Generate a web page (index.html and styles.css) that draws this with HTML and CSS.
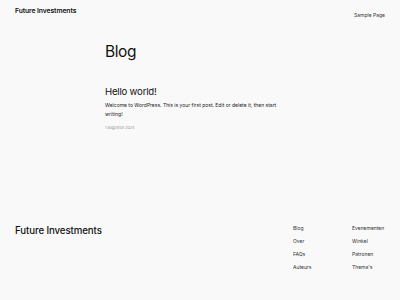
FILE: index.html
```html
<!DOCTYPE html>
<html lang="nl">
<head>
    <meta charset="UTF-8">
    <meta name="viewport" content="width=device-width, initial-scale=1.0">
    <title>Blog – Future Investments</title>
    <link rel="stylesheet" href="styles.css">
</head>
<body>
    <div class="page">
        <!-- kop -->
        <header class="site-header">
            <a class="site-title" href="#">Future Investments</a>
            <nav class="top-nav">
                <a href="#">Sample Page</a>
            </nav>
        </header>

        <!-- inhoud -->
        <main class="main">
            <h1 class="page-title">Blog</h1>

            <article class="post">
                <h2 class="post-title">Hello world!</h2>
                <p class="post-excerpt">Welcome to WordPress. This is your first post. Edit or delete it, then start writing!</p>
                <div class="post-date">1 augustus 2024</div>
            </article>
        </main>

        <!-- voet -->
        <footer class="site-footer">
            <a class="footer-title" href="#">Future Investments</a>
            <div class="footer-links">
                <ul class="footer-col">
                    <li><a href="#">Blog</a></li>
                    <li><a href="#">Over</a></li>
                    <li><a href="#">FAQs</a></li>
                    <li><a href="#">Auteurs</a></li>
                </ul>
                <ul class="footer-col">
                    <li><a href="#">Evenementen</a></li>
                    <li><a href="#">Winkel</a></li>
                    <li><a href="#">Patronen</a></li>
                    <li><a href="#">Thema's</a></li>
                </ul>
            </div>
        </footer>
    </div>
</body>
</html>
```

FILE: styles.css
```css
* {
    margin: 0;
    padding: 0;
    box-sizing: border-box;
}

body {
    font-family: Inter, 'Noto Sans', Arial, sans-serif;
    background: #f9f9f9;
    color: #111111;
    width: 400px;
    height: 300px;
    overflow: hidden;
}

a {
    color: inherit;
    text-decoration: none;
}

.page {
    display: flex;
    flex-direction: column;
    height: 300px;
}

.site-header {
    display: flex;
    justify-content: space-between;
    align-items: center;
    padding: 0 15px;
    height: 21px;
}

.site-title {
    font-size: 6.8px;
    font-weight: 600;
    letter-spacing: -0.1px;
}

.top-nav a {
    font-size: 5px;
    color: #333;
}

.main {
    padding: 21px 0 0 105px;
    width: 310px;
}

.page-title {
    font-size: 15.5px;
    font-weight: 400;
    letter-spacing: -0.4px;
    line-height: 20px;
}

.post {
    margin-top: 23px;
}

.post-title {
    font-size: 9.6px;
    font-weight: 400;
    letter-spacing: -0.2px;
    line-height: 13px;
}

.post-excerpt {
    margin-top: 3px;
    max-width: 189px;
    font-size: 5px;
    line-height: 9px;
    color: #222;
}

.post-date {
    margin-top: 6px;
    font-size: 3.8px;
    color: #999;
}

.site-footer {
    margin-top: auto;
    display: flex;
    justify-content: space-between;
    padding: 0 15px 30px 15px;
}

.footer-title {
    font-size: 9.7px;
    font-weight: 500;
    letter-spacing: -0.1px;
    line-height: 12px;
}

.footer-links {
    display: flex;
    gap: 34px;
    width: 92px;
}

.footer-col {
    list-style: none;
    display: flex;
    flex-direction: column;
    gap: 7px;
    width: 25px;
}

.footer-col li {
    font-size: 5px;
    line-height: 6px;
    color: #333;
}
```
